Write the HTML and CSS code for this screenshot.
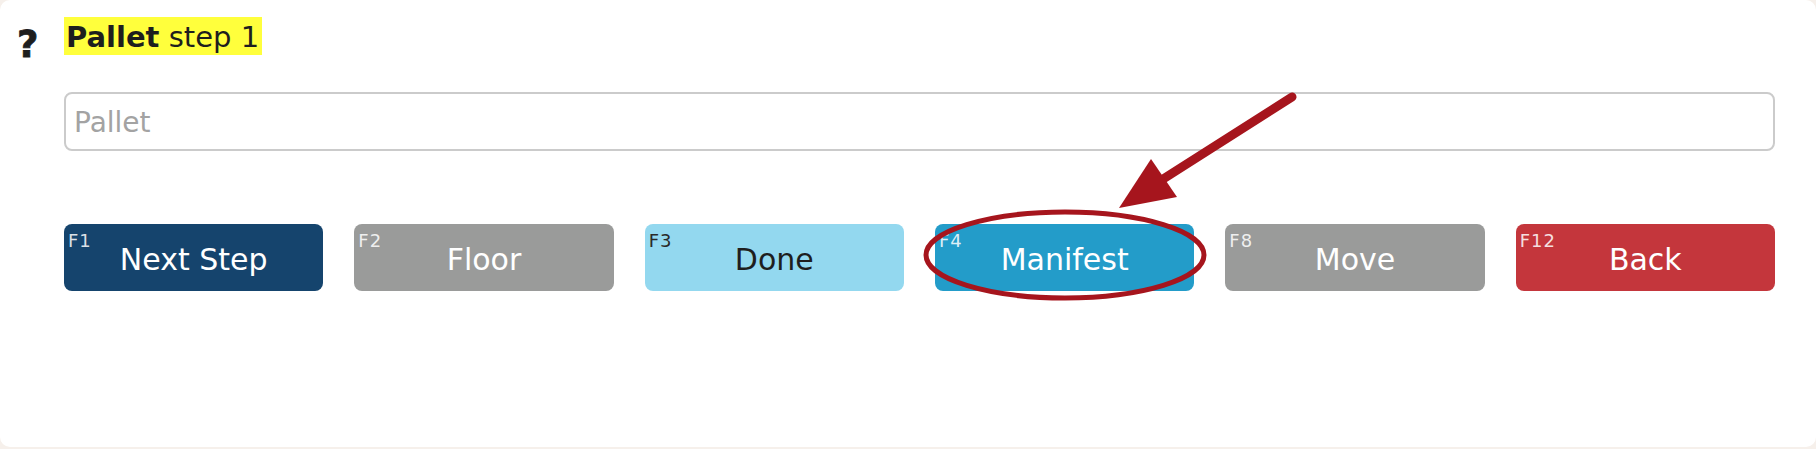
FILE: index.html
```html
<!DOCTYPE html>
<html lang="en">
<head>
  <meta charset="utf-8" />
  <title>Pallet step 1</title>
  <meta name="viewport" content="width=device-width, initial-scale=1.0">
  <link rel="stylesheet" href="styles.css">
</head>
<body>
  <div class="page">
    <div class="help">?</div>
    <div class="main">
      <h1 class="title"><span class="mark"><b>Pallet</b> step 1</span></h1>
      <input class="field" type="text" placeholder="Pallet">
      <div class="keys">
        <button class="key key-next"><span class="fkey">F1</span>Next Step</button>
        <button class="key key-grey"><span class="fkey">F2</span>Floor</button>
        <button class="key key-done"><span class="fkey">F3</span>Done</button>
        <button class="key key-manifest"><span class="fkey">F4</span>Manifest</button>
        <button class="key key-grey"><span class="fkey">F8</span>Move</button>
        <button class="key key-back"><span class="fkey">F12</span>Back</button>
      </div>
    </div>

    <!-- annotation drawn over the screen -->
    <svg class="annot" width="1816" height="447" viewBox="0 0 1816 447">
      <line x1="1292" y1="97" x2="1160" y2="181" stroke="#a6151d" stroke-width="9" stroke-linecap="round" />
      <polygon points="1119,208 1151,159 1177,197" fill="#a6151d" />
      <ellipse cx="1065" cy="255" rx="139" ry="43" fill="none" stroke="#a6151d" stroke-width="5" />
    </svg>
  </div>
</body>
</html>
```

FILE: styles.css
```css
body {
  margin: 0;
  font-family: "DejaVu Sans", Verdana, sans-serif;
  color: #222;
  background: #f6f0eb;
}
.page {
  position: relative;
  display: flex;
  box-sizing: border-box;
  height: 447px;
  padding: 17px 41px 0 17px;
  background: #fff;
  border-radius: 10px;
}
.help {
  flex: none;
  width: 47px;
  padding-top: 6px;
  font-size: 37px;
  font-weight: bold;
  color: #1e1e1e;
  -webkit-text-stroke: 0.8px #1e1e1e;
}
.main {
  flex: 1;
  min-width: 0;
}
.title {
  display: flex;
  margin: 0;
  font-size: 29px;
  font-weight: normal;
}
.mark {
  background: #ffff3c;
  padding: 3px 3px 1px 2px;
  color: #1e1e1e;
}
.field {
  display: block;
  box-sizing: border-box;
  width: 100%;
  height: 59px;
  margin-top: 37px;
  padding: 2px 8px 0;
  border: 2px solid #cbcbcb;
  border-radius: 8px;
  font-family: inherit;
  font-size: 28px;
  color: #222;
  outline: none;
}
.field::placeholder {
  color: #a3a3a3;
}
.keys {
  display: grid;
  grid-template-columns: repeat(6, 1fr);
  gap: 31px;
  margin-top: 73px;
}
.key {
  position: relative;
  height: 67px;
  padding: 4px 0 0;
  border: 0;
  border-radius: 8px;
  font-family: inherit;
  font-size: 30px;
  color: #fff;
}
.fkey {
  position: absolute;
  top: 6px;
  left: 4px;
  font-size: 18px;
  letter-spacing: 1px;
  color: rgba(255,255,255,0.85);
}
.key-next {
  background: #15446d;
}
.key-grey {
  background: #9a9b9a;
}
.key-done {
  background: #93d8ef;
  color: #1e1e1e;
}
.key-done .fkey {
  color: #2a2a2a;
}
.key-manifest {
  background: #239cc9;
}
.key-back {
  background: #c4363c;
}
.annot {
  position: absolute;
  left: 0;
  top: 0;
  pointer-events: none;
}
```
